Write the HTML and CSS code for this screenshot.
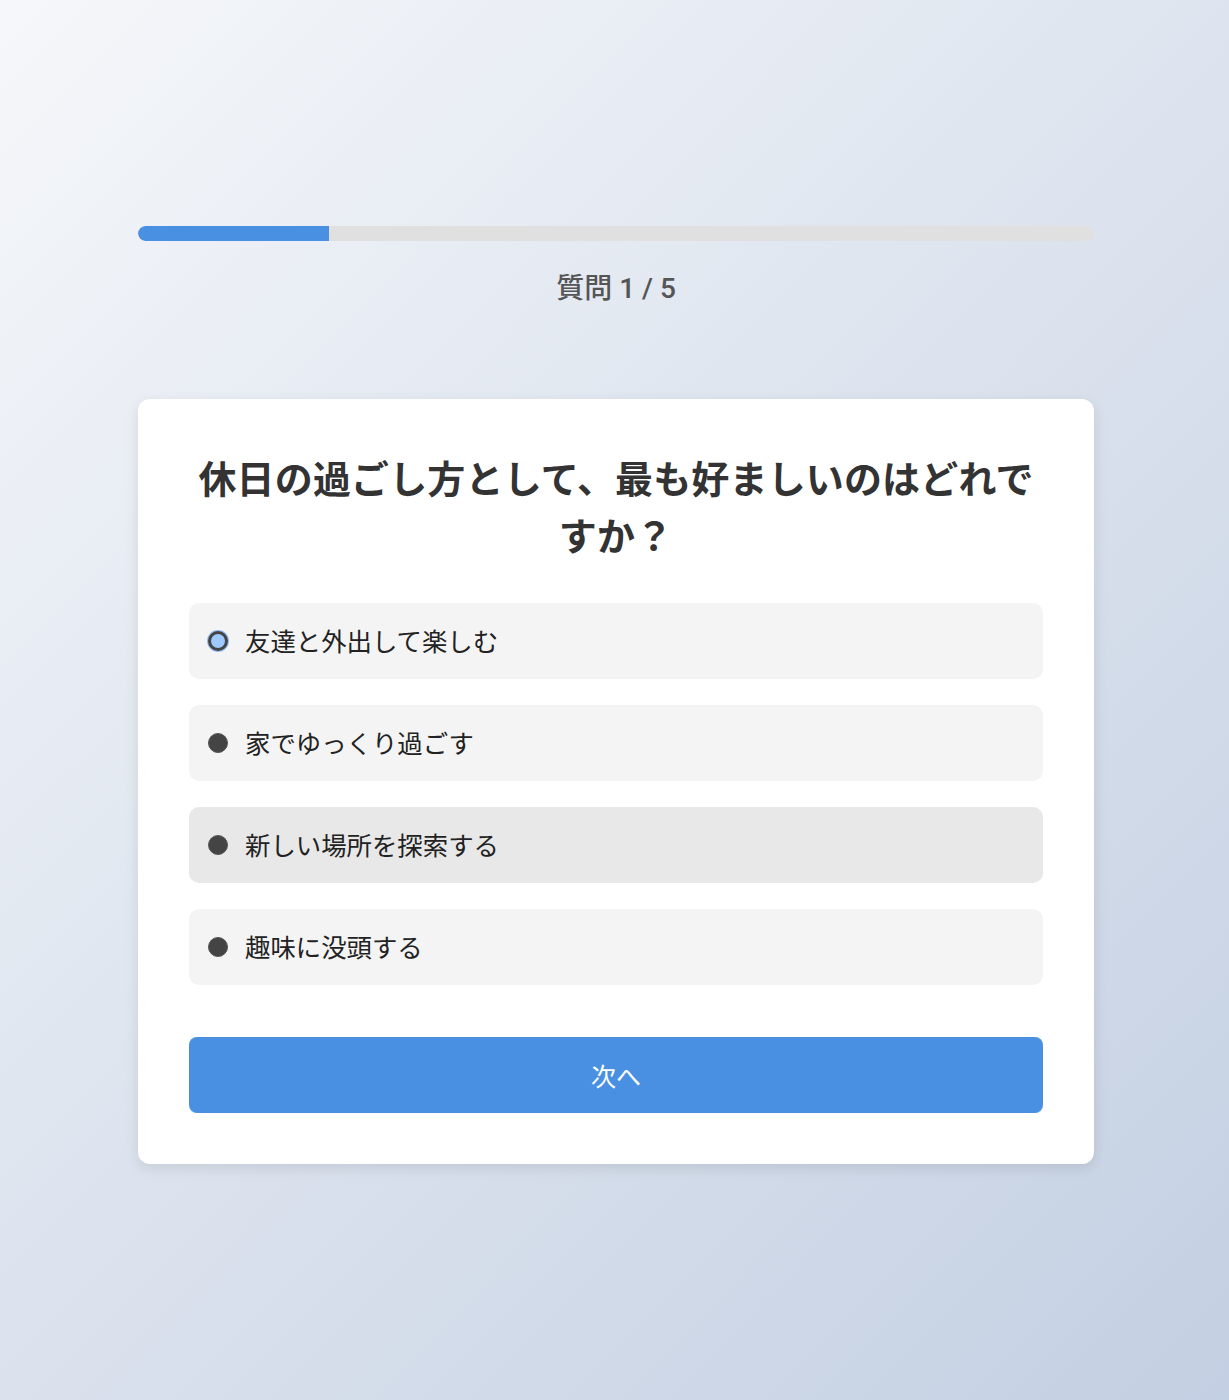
FILE: index.html
```html
<!DOCTYPE html>
<html lang="ja">
<head>
<meta charset="utf-8">
<title>質問</title>
<link rel="stylesheet" href="styles.css">
</head>
<body>
<div class="page">
  <div class="quiz">
    <div class="progress"><div class="progress-fill" style="width:20%"></div></div>
    <div class="counter">質問 1 / 5</div>
    <div class="card">
      <h1 class="question">休日の過ごし方として、最も好ましいのはどれですか？</h1>
      <div class="options">
        <label class="option"><span class="radio radio-focus"></span><span class="option-text">友達と外出して楽しむ</span></label>
        <label class="option"><span class="radio"></span><span class="option-text">家でゆっくり過ごす</span></label>
        <label class="option option-hover"><span class="radio"></span><span class="option-text">新しい場所を探索する</span></label>
        <label class="option"><span class="radio"></span><span class="option-text">趣味に没頭する</span></label>
      </div>
      <button class="next">次へ</button>
    </div>
  </div>
</div>
</body>
</html>
```

FILE: styles.css
```css
html, body {
  margin: 0;
  padding: 0;
}
body {
  min-height: 1400px;
  background: linear-gradient(135deg, #f5f7fa 0%, #c3cfe2 100%);
  font-family: "Noto Sans", "Noto Sans CJK JP", sans-serif;
  color: #333;
}
.page {
  display: flex;
  justify-content: center;
  padding: 226px 0 0 3px;
}
.quiz {
  width: 956px;
}
.progress {
  height: 15px;
  background: #e0e0e0;
  border-radius: 8px;
  overflow: hidden;
}
.progress-fill {
  height: 100%;
  background: #4a90e2;
  border-radius: 8px 0 0 8px;
}
.counter {
  margin-top: 27px;
  text-align: center;
  font-family: Roboto, "Noto Sans CJK JP", sans-serif;
  font-size: 28px;
  line-height: 42px;
  font-weight: 500;
  color: #555;
}
.card {
  margin-top: 89px;
  background: #fff;
  border-radius: 12px;
  padding: 51px;
  box-shadow: 0 4px 14px rgba(0, 0, 0, 0.1);
}
.question {
  margin: 0 0 39px;
  text-align: center;
  font-size: 38px;
  line-height: 57px;
  font-weight: 700;
  letter-spacing: 0.15px;
  color: #333;
}
.options {
  display: flex;
  flex-direction: column;
  gap: 26px;
}
.option {
  display: flex;
  align-items: center;
  height: 76px;
  padding: 0 19px;
  background: #f4f4f4;
  border-radius: 10px;
  box-sizing: border-box;
}
.option-hover {
  background: #e8e8e8;
}
.radio {
  width: 20px;
  height: 20px;
  border-radius: 50%;
  background: #444;
  box-sizing: border-box;
  border: 1px solid #555;
  flex: none;
}
.radio-focus {
  background: #9ec9ff;
  border: 3px solid #444;
  box-shadow: 0 0 0 1px #8fbcf5;
}
.option-text {
  margin-left: 17px;
  font-size: 25.4px;
  line-height: 36px;
  color: #222;
}
.next {
  display: block;
  width: 100%;
  height: 76px;
  margin-top: 52px;
  border: none;
  border-radius: 8px;
  background: #4a90e2;
  color: #fff;
  font-family: inherit;
  font-size: 25px;
}
```
